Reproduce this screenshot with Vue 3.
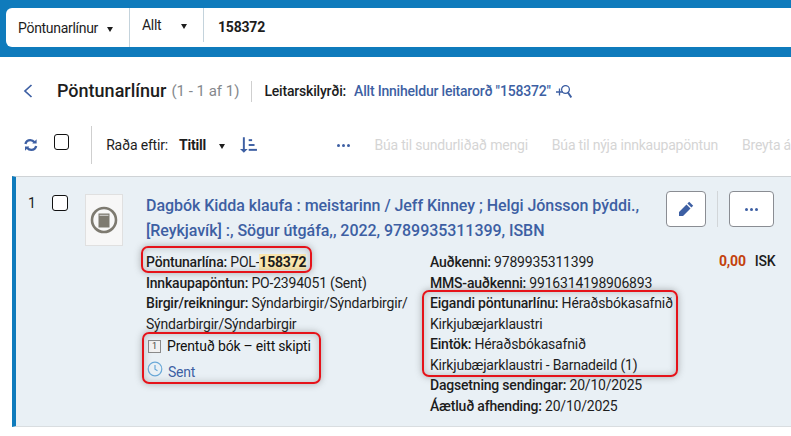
<template>
  <div class="page">
    <header class="topbar">
      <div class="search">
        <div class="seg seg-a"><span>Pöntunarlínur</span><i class="caret"></i></div>
        <div class="seg seg-b"><span>Allt</span><i class="caret"></i></div>
        <div class="query">158372</div>
      </div>
    </header>

    <div class="headline">
      <svg class="back" width="10" height="14" viewBox="0 0 10 14"><path d="M8.500 1 2 7l6.500 6" fill="none" stroke="#3d5fa3" stroke-width="1.700"/></svg>
      <h1>Pöntunarlínur</h1>
      <span class="count">(1 - 1 af 1)</span>
      <span class="vsep"></span>
      <span class="crit-label">Leitarskilyrði:</span>
      <span class="crit">Allt Inniheldur leitarorð "158372"</span>
      <svg class="plus-search" width="16" height="13" viewBox="0 0 16 13" fill="none" stroke="#3d5fa3" stroke-width="1.300">
        <path d="M0 7H7M3.500 3.500V10.500"/>
        <circle cx="9.500" cy="4.500" r="3.900"/>
        <path d="M12 7.500 15.300 12.500" stroke-width="1.900"/>
      </svg>
    </div>

    <div class="toolbar">
      <svg class="refresh" width="14" height="14" viewBox="0 0 14 14" fill="none" stroke="#3d5fa3" stroke-width="2.400">
        <path d="M1.500 6C2 3.500 4 2 6.500 2c1.800 0 3.200.8 4.300 2.200"/>
        <path d="M12.500 8c-.5 2.500-2.500 4-5 4-1.800 0-3.200-.8-4.300-2.200"/>
        <path d="M13 1v4.500H8.500z" fill="#3d5fa3" stroke="none"/>
        <path d="M1 13V8.500h4.500z" fill="#3d5fa3" stroke="none"/>
      </svg>
      <span class="check check-top"></span>
      <span class="vsep tall"></span>
      <span class="sort-label">Raða eftir:</span>
      <strong class="sort-value">Titill</strong>
      <i class="caret sort-caret"></i>
      <svg class="sort-icon" width="19" height="18" viewBox="0 0 19 18" fill="#3d5fa3">
        <path d="M4 1h2v12h3l-4 4-4-4h3z"/>
        <rect x="10" y="3" width="3.500" height="2"/>
        <rect x="10" y="8" width="6" height="2"/>
        <rect x="10" y="13" width="8.500" height="2"/>
      </svg>
      <span class="dots tool-dots"><b></b><b></b><b></b></span>
      <span class="action">Búa til sundurliðað mengi</span>
      <span class="action">Búa til nýja innkaupapöntun</span>
      <span class="action">Breyta á</span>
    </div>

    <section class="row">
      <div class="index">1</div>
      <span class="check"></span>
      <div class="thumb">
        <svg width="28" height="28" viewBox="0 0 28 28">
          <circle cx="14" cy="14" r="12" fill="none" stroke="#7d7a70" stroke-width="2.600"/>
          <path d="M8.500 7.500h11v14h-11z" fill="#7d7a70"/>
          <path d="M9.500 9.300h9" stroke="#eee" stroke-width=".8"/>
        </svg>
      </div>
      <div class="main">
        <div class="title">Dagbók Kidda klaufa : meistarinn / Jeff Kinney ; Helgi Jónsson þýddi., [Reykjavík] :, Sögur útgáfa,, 2022, 9789935311399, ISBN</div>
        <div class="cols">
          <div class="col-left">
            <p><b>Pöntunarlína:</b> POL-<mark>158372</mark></p>
            <p><b>Innkaupapöntun:</b> PO-2394051 (Sent)</p>
            <p><b>Birgir/reikningur:</b> Sýndarbirgir/Sýndarbirgir/<br>Sýndarbirgir/Sýndarbirgir</p>
            <p class="type">
              <span class="one">1</span>
              <span>Prentuð bók – eitt skipti</span>
            </p>
            <p class="status">
              <svg class="clock" width="16" height="16" viewBox="0 0 16 16" fill="none" stroke="#6aa9d8" stroke-width="1.200">
                <circle cx="8" cy="8" r="6.800"/><path d="M8 4v4.200l2.500 1.500"/>
              </svg>
              <span>Sent</span>
            </p>
          </div>
          <div class="col-right">
            <p><b>Auðkenni:</b> 9789935311399</p>
            <p><b>MMS-auðkenni:</b> 9916314198906893</p>
            <p><b>Eigandi pöntunarlínu:</b> Héraðsbókasafnið<br>Kirkjubæjarklaustri</p>
            <p><b>Eintök:</b> Héraðsbókasafnið<br>Kirkjubæjarklaustri - Barnadeild (1)</p>
            <p><b>Dagsetning sendingar:</b> 20/10/2025</p>
            <p><b>Áætluð afhending:</b> 20/10/2025</p>
          </div>
          <div class="price"><b>0,00</b><span>ISK</span></div>
        </div>
      </div>
      <div class="buttons">
        <button class="btn edit" type="button">
          <svg width="16" height="16" viewBox="0 0 16 16" fill="#3d5fa3">
            <path d="M11.200 .8 15.200 4.800 13.400 6.600 9.400 2.600zM8.500 3.500l4 4L5 15H1v-4z"/>
          </svg>
        </button>
        <span class="btn-sep"></span>
        <button class="btn more" type="button"><span class="dots"><b></b><b></b><b></b></span></button>
      </div>

      <span class="mark mark-pol"></span>
      <span class="mark mark-type"></span>
      <span class="mark mark-owner"></span>
    </section>
  </div>
</template>

<script setup>
</script>

<style>
html, body { margin: 0; background: #fff; overflow: hidden; }
</style>

<style scoped>
.page {
  width: 791px;
  height: 436px;
  overflow: hidden;
  background: #fff;
  font-family: Roboto, "Liberation Sans", sans-serif;
  font-size: 14px;
  letter-spacing: -.2px;
  color: #1d1d1d;
}
.topbar {
  height: 57px;
  box-sizing: border-box;
  padding: 8px 0 10px 6px;
  background: #0f7bbc;
}
.search {
  height: 39px;
  display: flex;
  background: #fff;
  border-radius: 6px 0 0 6px;
}
.seg {
  display: flex;
  align-items: center;
  border-right: 1px solid #c4d3dc;
  box-sizing: border-box;
  padding-left: 12px;
  letter-spacing: -.3px;
}
.seg-a { width: 124px; height: 39px; }
.seg-b { width: 74px; height: 34px; }
.seg-a .caret { margin-left: 9px; }
.seg-b .caret { margin-left: 20px; }
.caret {
  width: 0;
  height: 0;
  border-left: 3.500px solid transparent;
  border-right: 3.500px solid transparent;
  border-top: 5px solid #1d1d1d;
  margin-top: 3px;
}
.query {
  padding: 10px 0 0 14px;
  font-weight: 700;
  line-height: 18px;
}
.headline {
  display: flex;
  align-items: center;
  height: 24px;
  margin-top: 22px;
  padding-left: 23px;
}
.back { margin-right: 24px; }
h1 {
  margin: 0;
  font-size: 18px;
  font-weight: 500;
  line-height: 24px;
  letter-spacing: 0;
}
.count {
  margin-left: 5px;
  font-size: 15px;
  letter-spacing: 0;
  color: #85888c;
}
.vsep {
  width: 1px;
  height: 21px;
  margin: 0 12px;
  background: #cfcfcf;
}
.crit-label { font-weight: 500; }
.crit {
  margin-left: 8px;
  font-weight: 500;
  color: #3d5fa3;
}
.plus-search { margin-left: 5px; }
.toolbar {
  display: flex;
  align-items: center;
  height: 38px;
  margin-top: 23px;
  padding-left: 24px;
  white-space: nowrap;
}
.refresh { margin-right: 16px; }
.check {
  display: block;
  width: 14px;
  height: 14px;
  border: 1px solid #111;
  border-radius: 3px;
  background: #fff;
}
.check-top { margin-top: -6px; }
.vsep.tall {
  height: 38px;
  margin: 0 14px 0 22px;
}
.sort-label { margin-right: 11px; }
.sort-value { font-weight: 700; }
.sort-caret { margin-left: 13px; }
.sort-icon { margin-left: 14px; }
.dots { display: inline-flex; gap: 2px; }
.dots b {
  width: 3px;
  height: 3px;
  border-radius: 50%;
  background: #3d5fa3;
}
.tool-dots { margin-left: 80px; }
.action { color: #d5d5d5; margin-left: 24px; }
.row {
  position: relative;
  display: flex;
  align-items: flex-start;
  width: 779px;
  height: 251px;
  box-sizing: border-box;
  margin: 12px 0 0 12px;
  padding-top: 18px;
  background: #e9f0f5;
  border-left: 4px solid #0f7bbc;
  border-top: 1px solid #cfd3d6;
  border-bottom: 1px solid #d9dde0;
}
.index {
  width: 24px;
  margin-left: 12px;
  line-height: 16px;
}
.row > .check { flex: none; margin-top: 0; }
.thumb {
  flex: none;
  width: 36px;
  height: 50px;
  margin: -1px 0 0 17px;
  display: flex;
  align-items: center;
  justify-content: center;
  background: #f7f7f7;
  border: 1px solid #e0e0e0;
}
.main {
  flex: none;
  width: 520px;
  margin-left: 23px;
  margin-top: -2px;
}
.title {
  width: 505px;
  font-size: 16px;
  letter-spacing: -.05px;
  font-weight: 500;
  line-height: 25px;
  color: #3d5fa3;
}
.cols { display: flex; margin-top: 9px; }
.col-left { width: 284px; flex: none; }
.col-right { width: 270px; flex: none; }
p { margin: 0; line-height: 20.500px; }
p b { font-weight: 500; }
mark {
  background: #fbe7ae;
  color: inherit;
  font-weight: 700;
}
.type {
  display: flex;
  align-items: center;
  gap: 6px;
  height: 24px;
  padding-left: 2px;
  color: #111;
}
.one {
  display: flex;
  width: 11px;
  height: 11px;
  align-items: center;
  justify-content: center;
  font-size: 9px;
  line-height: 1;
  border: 1px solid #8a8a8a;
  background: #f1f1f1;
  color: #444;
}
.status {
  display: flex;
  align-items: center;
  gap: 5px;
  padding-left: 1px;
  color: #3d5fa3;
  margin-top: 4px;
}
.clock { margin-top: -6px; }
.price {
  position: absolute;
  left: 703px;
  top: 76px;
  display: flex;
  gap: 9px;
}
.price b { color: #c3410d; font-weight: 700; }
.price span { font-weight: 500; }
.buttons {
  position: absolute;
  top: 14px;
  left: 650px;
  display: flex;
  align-items: center;
}
.btn {
  display: flex;
  align-items: center;
  justify-content: center;
  box-sizing: border-box;
  height: 36px;
  padding: 0;
  background: #fff;
  border: 1px solid #8a8d93;
  border-radius: 4px;
}
.edit { width: 40px; }
.more { width: 45px; }
.btn-sep {
  width: 1px;
  height: 36px;
  margin: 0 11px;
  background: #d2d6d9;
}
.mark {
  position: absolute;
  box-sizing: border-box;
  border: 2px solid #e5131a;
  border-radius: 7px;
  box-shadow: 0 0 7px rgba(70, 70, 70, .4), inset 0 0 7px rgba(70, 70, 70, .3);
  pointer-events: none;
}
.mark-pol { left: 125px; top: 69px; width: 171px; height: 27px; }
.mark-type { left: 126px; top: 155px; width: 179px; height: 52px; }
.mark-owner { left: 406px; top: 113px; width: 256px; height: 87px; }
</style>
